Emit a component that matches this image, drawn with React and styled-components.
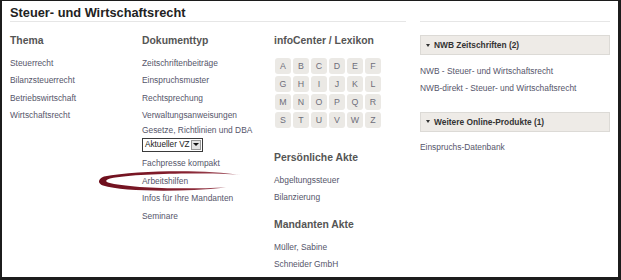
import React from 'react';
import styled, { createGlobalStyle } from 'styled-components';

const GlobalStyle = createGlobalStyle`
  html, body {
    margin: 0;
    padding: 0;
    background: #ffffff;
  }
  body {
    font-family: "Liberation Sans", Arial, sans-serif;
  }
`;

// Page frame
const Frame = styled.div`
  box-sizing: border-box;
  width: 621px;
  height: 280px;
  border-style: solid;
  border-color: #1c1c1c;
  border-width: 1px 3px 3px 2px;
  background: #fff;
  padding: 0 8px 0 8px;
  display: grid;
  grid-template-columns: 396px 190px;
  column-gap: 14px;
  overflow: hidden;
`;

const Main = styled.div`
  display: flex;
  flex-direction: column;
`;

const PageHeader = styled.div`
  height: 15px;
  padding: 4px 0 1px;
  border-bottom: 1px solid #e6e6e6;
  margin-bottom: 13px;
`;

const PageTitle = styled.h1`
  margin: 0;
  font-size: 12.8px;
  line-height: 15px;
  font-weight: bold;
  color: #222;
`;

const Columns = styled.div`
  display: grid;
  grid-template-columns: 132px 132px 132px;
`;

const Column = styled.div`
  display: flex;
  flex-direction: column;
`;

const ColumnTitle = styled.h2`
  margin: 0 0 ${(p) => p.$gap ?? 10.5}px;
  font-size: 10.4px;
  line-height: 12px;
  font-weight: bold;
  color: #555;
`;

const LinkList = styled.ul`
  list-style: none;
  margin: 0 0 ${(p) => p.$after ?? 0}px;
  padding: 0;
  display: flex;
  flex-direction: column;
  gap: 6.5px;
`;

const Item = styled.li`
  position: relative;
  margin-top: ${(p) => p.$shift ?? 0}px;
`;

const Link = styled.a`
  display: block;
  font-size: 8.4px;
  line-height: 11px;
  color: #55556a;
  text-decoration: none;
  white-space: nowrap;
`;

// Dropdown under "Gesetze, Richtlinien und DBA"
const SelectBox = styled.div`
  box-sizing: border-box;
  margin-top: 2px;
  width: 61px;
  height: 14px;
  border: 1px solid #3a3a3a;
  display: flex;
  align-items: center;
  justify-content: space-between;
  background: #fff;
`;

const SelectText = styled.span`
  font-size: 8.2px;
  line-height: 12px;
  color: #222;
  padding-left: 2px;
  white-space: nowrap;
`;

const SelectButton = styled.span`
  box-sizing: border-box;
  flex-shrink: 0;
  width: 10px;
  height: 10px;
  margin-right: 1px;
  border: 1px solid #999;
  background: #e4e4e4;
  display: flex;
  align-items: center;
  justify-content: center;

  &::after {
    content: '';
    border-left: 3px solid transparent;
    border-right: 3px solid transparent;
    border-top: 3px solid #111;
  }
`;

// hand-drawn marker around "Arbeitshilfen"
const Swoosh = styled.svg`
  position: absolute;
  left: -44px;
  top: -4.5px;
  width: 148px;
  height: 22px;
  overflow: visible;
  pointer-events: none;
`;

// infoCenter letters
const LetterGrid = styled.div`
  display: grid;
  grid-template-columns: repeat(6, 16px);
  grid-auto-rows: 16px;
  gap: 2px;
  margin: 0 0 24px 1px;
`;

const Letter = styled.a`
  display: flex;
  align-items: center;
  justify-content: center;
  border-radius: 3px;
  background: #ebe9e5;
  color: #6e6e7a;
  font-size: 8.8px;
  text-decoration: none;
`;

// Sidebar
const Sidebar = styled.div`
  display: flex;
  flex-direction: column;
`;

const SideHeader = styled.div`
  height: 20px;
  border-bottom: 1px solid #e6e6e6;
  margin-bottom: 13px;
`;

const Panel = styled.div`
  box-sizing: border-box;
  height: 20px;
  border: 1px solid #dcdad6;
  background: #eeebe7;
  display: flex;
  align-items: center;
  gap: 4px;
  padding-left: 5px;
  margin-bottom: 10.5px;
`;

const Caret = styled.span`
  width: 0;
  height: 0;
  border-left: 2.5px solid transparent;
  border-right: 2.5px solid transparent;
  border-top: 3.5px solid #333;
`;

const PanelTitle = styled.span`
  font-size: 8.4px;
  font-weight: bold;
  color: #333;
`;

const letters = 'ABCDEFGHIJKLMNOPQRSTUVWZ'.split('');

export default function App() {
  return (
    <>
      <GlobalStyle />
      <Frame>
        <Main>
          <PageHeader>
            <PageTitle>Steuer- und Wirtschaftsrecht</PageTitle>
          </PageHeader>
          <Columns>
            <Column>
              <ColumnTitle>Thema</ColumnTitle>
              <LinkList>
                {['Steuerrecht', 'Bilanzsteuerrecht', 'Betriebswirtschaft', 'Wirtschaftsrecht'].map((t) => (
                  <Item key={t}><Link href="#">{t}</Link></Item>
                ))}
              </LinkList>
            </Column>

            <Column>
              <ColumnTitle>Dokumenttyp</ColumnTitle>
              <LinkList>
                <Item><Link href="#">Zeitschriftenbeiträge</Link></Item>
                <Item><Link href="#">Einspruchsmuster</Link></Item>
                <Item><Link href="#">Rechtsprechung</Link></Item>
                <Item><Link href="#">Verwaltungsanweisungen</Link></Item>
                <Item $shift={-3}>
                  <Link href="#">Gesetze, Richtlinien und DBA</Link>
                  <SelectBox>
                    <SelectText>Aktueller VZ</SelectText>
                    <SelectButton />
                  </SelectBox>
                </Item>
                <Item><Link href="#">Fachpresse kompakt</Link></Item>
                <Item>
                  <Link href="#">Arbeitshilfen</Link>
                  <Swoosh viewBox="0 0 148 22">
                    <defs>
                      <linearGradient id="swoosh" x1="0" x2="1" y1="0" y2="0">
                        <stop offset="0" stopColor="#6e0f1d" />
                        <stop offset="0.6" stopColor="#86202f" />
                        <stop offset="1" stopColor="#a8606c" />
                      </linearGradient>
                    </defs>
                    <path
                      d="M143 4 C110 -1.5, 40 -1, 6 5.5 C-0.5 8, -0.5 12.5, 5 14.5 C25 20.5, 80 21.5, 128 16.5 C80 18.5, 30 17, 10 11.5 C7 10.5, 8 8.5, 12 7.5 C40 2, 110 1.5, 143 4 Z"
                      fill="url(#swoosh)"
                    />
                  </Swoosh>
                </Item>
                <Item><Link href="#">Infos für Ihre Mandanten</Link></Item>
                <Item><Link href="#">Seminare</Link></Item>
              </LinkList>
            </Column>

            <Column>
              <ColumnTitle $gap={11}>infoCenter / Lexikon</ColumnTitle>
              <LetterGrid>
                {letters.map((l) => (
                  <Letter key={l} href="#">{l}</Letter>
                ))}
              </LetterGrid>
              <ColumnTitle>Persönliche Akte</ColumnTitle>
              <LinkList $after={16}>
                <Item><Link href="#">Abgeltungssteuer</Link></Item>
                <Item><Link href="#">Bilanzierung</Link></Item>
              </LinkList>
              <ColumnTitle>Mandanten Akte</ColumnTitle>
              <LinkList>
                <Item><Link href="#">Müller, Sabine</Link></Item>
                <Item><Link href="#">Schneider GmbH</Link></Item>
              </LinkList>
            </Column>
          </Columns>
        </Main>

        <Sidebar>
          <SideHeader />
          <Panel>
            <Caret />
            <PanelTitle>NWB Zeitschriften (2)</PanelTitle>
          </Panel>
          <LinkList $after={17.5}>
            <Item><Link href="#">NWB - Steuer- und Wirtschaftsrecht</Link></Item>
            <Item><Link href="#">NWB-direkt - Steuer- und Wirtschaftsrecht</Link></Item>
          </LinkList>
          <Panel>
            <Caret />
            <PanelTitle>Weitere Online-Produkte (1)</PanelTitle>
          </Panel>
          <LinkList>
            <Item><Link href="#">Einspruchs-Datenbank</Link></Item>
          </LinkList>
        </Sidebar>
      </Frame>
    </>
  );
}
